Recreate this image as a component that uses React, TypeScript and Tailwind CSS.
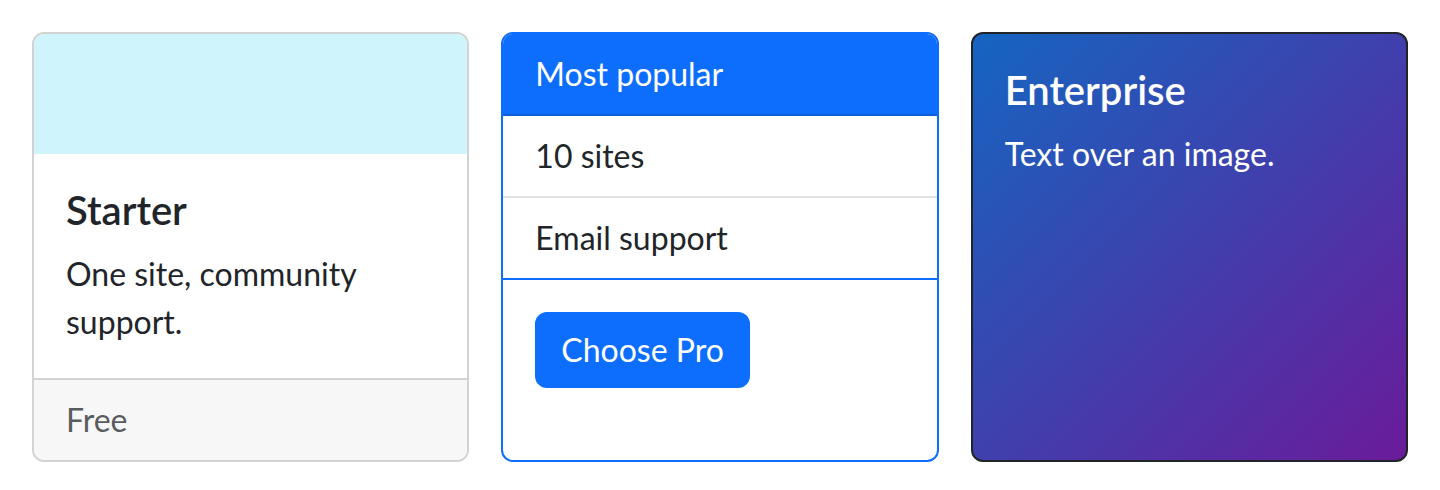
const font = { fontFamily: 'Lato, "Noto Sans", sans-serif' };

function StarterCard() {
  return (
    <div className="flex flex-col overflow-hidden rounded-[12px] border-2 border-[#d3d3d3] bg-white">
      <div className="h-[120px] bg-[#cff4fc]" />
      <div className="flex-1 p-8">
        <h5 className="mb-4 text-[40px] font-semibold leading-[1.2] text-[#212529]">Starter</h5>
        <p className="text-[32px] leading-[1.5] text-[#212529]">One site, community support.</p>
      </div>
      <div className="border-t-2 border-[#d3d3d3] bg-[#f7f7f7] px-8 py-4 text-[32px] leading-[1.5] text-[#595c5f]">
        Free
      </div>
    </div>
  );
}

function ProCard() {
  const items = ['10 sites', 'Email support'];
  return (
    <div className="flex flex-col overflow-hidden rounded-[12px] border-2 border-[#0d6efd] bg-white">
      <div className="border-b-2 border-[#0b5ed7] bg-[#0d6efd] px-8 py-4 text-[32px] leading-[1.5] text-white">
        Most popular
      </div>
      <ul className="border-b-2 border-[#0d6efd]">
        {items.map((item, i) => (
          <li
            key={item}
            className={`px-8 py-4 text-[32px] leading-[1.5] text-[#212529] ${
              i < items.length - 1 ? 'border-b-2 border-[#dee2e6]' : ''
            }`}
          >
            {item}
          </li>
        ))}
      </ul>
      <div className="flex-1 p-8">
        <button className="rounded-[12px] border-2 border-[#0d6efd] bg-[#0d6efd] px-6 py-3 text-[32px] leading-[1.5] text-white">
          Choose Pro
        </button>
      </div>
    </div>
  );
}

function EnterpriseCard() {
  return (
    <div className="rounded-[12px] border-2 border-[#212529] bg-[linear-gradient(135deg,#1565c0,#6a1b9a)] p-8 text-white">
      <h5 className="mb-4 text-[40px] font-semibold leading-[1.2]">Enterprise</h5>
      <p className="text-[32px] leading-[1.5]">Text over an image.</p>
    </div>
  );
}

export default function App() {
  return (
    <div className="grid grid-cols-3 gap-8 bg-white p-8" style={font}>
      <StarterCard />
      <ProCard />
      <EnterpriseCard />
    </div>
  );
}
